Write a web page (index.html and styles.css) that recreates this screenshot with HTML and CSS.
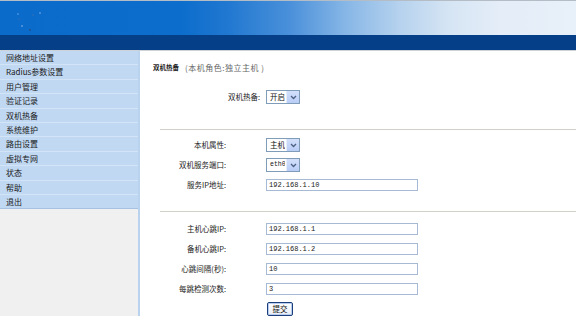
FILE: index.html
```html
<!DOCTYPE html>
<html lang="zh-CN">
<head>
<meta charset="utf-8">
<title>双机热备</title>
<link rel="stylesheet" href="styles.css">
</head>
<body>
<div class="header">
  <svg class="logo" width="60" height="34" viewBox="0 0 60 34">
    <circle cx="18" cy="13" r="0.8" fill="#6fa8e8"/>
    <circle cx="33" cy="14" r="0.8" fill="#3e6fae"/>
    <circle cx="40" cy="12" r="0.8" fill="#7fb4ec"/>
    <circle cx="19" cy="18" r="0.7" fill="#3c6aa8"/>
    <circle cx="22" cy="25" r="0.8" fill="#8fbcef"/>
    <circle cx="30" cy="29" r="0.9" fill="#224d86"/>
  </svg>
</div>
<div class="navbar"></div>
<div class="main">
  <div class="sidebar">
    <ul class="menu">
      <li>网络地址设置</li>
      <li>Radius参数设置</li>
      <li>用户管理</li>
      <li>验证记录</li>
      <li>双机热备</li>
      <li>系统维护</li>
      <li>路由设置</li>
      <li>虚拟专网</li>
      <li>状态</li>
      <li>帮助</li>
      <li>退出</li>
    </ul>
    <div class="sidebar-fill"></div>
  </div>
  <div class="content">
    <div class="title"><b>双机热备</b><span class="role">(本机角色:独立主机 )</span></div>
    <div class="form-top">
      <label class="lbl">双机热备:</label>
      <span class="sel"><select><option>开启</option><option>关闭</option></select><span class="arrow"><svg width="7" height="5" viewBox="0 0 7 5"><path d="M1 1 L3.5 3.5 L6 1" fill="none" stroke="#4d6185" stroke-width="1.3"/></svg></span></span>
    </div>
    <hr class="sep sep1">
    <div class="form-grid">
      <label class="lbl">本机属性:</label>
      <span class="sel"><select><option>主机</option><option>备机</option></select><span class="arrow"><svg width="7" height="5" viewBox="0 0 7 5"><path d="M1 1 L3.5 3.5 L6 1" fill="none" stroke="#4d6185" stroke-width="1.3"/></svg></span></span>
      <label class="lbl">双机服务端口:</label>
      <span class="sel mono"><select><option>eth0</option><option>eth1</option></select><span class="arrow"><svg width="7" height="5" viewBox="0 0 7 5"><path d="M1 1 L3.5 3.5 L6 1" fill="none" stroke="#4d6185" stroke-width="1.3"/></svg></span></span>
      <label class="lbl">服务IP地址:</label>
      <input class="txt" type="text" value="192.168.1.10">
    </div>
    <hr class="sep sep2">
    <div class="form-grid">
      <label class="lbl">主机心跳IP:</label>
      <input class="txt" type="text" value="192.168.1.1">
      <label class="lbl">备机心跳IP:</label>
      <input class="txt" type="text" value="192.168.1.2">
      <label class="lbl">心跳间隔(秒):</label>
      <input class="txt" type="text" value="10">
      <label class="lbl">每跳检测次数:</label>
      <input class="txt" type="text" value="3">
      <span></span>
      <span class="btn-cell"><button class="btn" type="button">提交</button></span>
    </div>
  </div>
</div>
</body>
</html>
```

FILE: styles.css
```css
* { box-sizing: border-box; }
html, body {
  margin: 0;
  padding: 0;
  background: #ffffff;
}
body {
  width: 576px;
  font-family: "Noto Sans CJK SC", "Liberation Sans", sans-serif;
  color: #222;
  overflow: hidden;
}
.header {
  height: 35px;
  border-top: 1px solid #b4bcc6;
  background: linear-gradient(to right,
    #0a6bcb 0px,
    #0c6dcc 180px,
    #1f77d0 225px,
    #4a90da 290px,
    #86b6e6 345px,
    #b6d2ee 400px,
    #d6e5f4 450px,
    #e4edf8 500px,
    #e8f0f9 576px);
}
.logo { display: block; }
.navbar {
  height: 15px;
  background: #053f87;
}
.main {
  display: flex;
  align-items: flex-start;
  border-top: 1px solid #cdd2d8;
}
.sidebar {
  width: 140px;
  flex: none;
  border-right: 2px solid #b9d3ee;
}
.menu {
  list-style: none;
  margin: 0;
  padding: 0;
}
.menu li {
  height: 14.4px;
  line-height: 13.4px;
  padding-left: 6px;
  font-size: 8px;
  color: #1a1a1a;
  background: #c0d8f2;
  border-bottom: 1px solid #d3e4f7;
}
.menu li:last-child {
  border-bottom: 1px solid #a6c2e2;
}
.sidebar-fill {
  height: 107px;
  background: #f0f0f0;
}
.content {
  flex: 1;
  padding-top: 11px;
}
.title {
  display: flex;
  align-items: center;
  height: 10px;
  padding-left: 13px;
}
.title b {
  font-size: 6.5px;
  color: #222;
}
.role {
  margin-left: 6px;
  font-size: 8px;
  letter-spacing: 0.5px;
  color: #666;
}
.form-top {
  display: grid;
  grid-template-columns: 120px auto;
  column-gap: 6px;
  align-items: center;
  justify-items: start;
  margin-top: 18px;
}
.form-grid {
  display: grid;
  grid-template-columns: 86px auto;
  column-gap: 40px;
  row-gap: 6px;
  align-items: center;
  justify-items: start;
}
.lbl {
  justify-self: end;
  font-size: 7.5px;
  line-height: 14px;
  color: #222;
}
.sep {
  border: 0;
  border-top: 1px solid #d0d0c8;
  height: 0;
  margin: 0 0 0 20px;
}
.sep1 { margin-top: 25px; margin-bottom: 8px; }
.sep2 { margin-top: 19px; margin-bottom: 10px; }
.sel {
  display: flex;
  width: 34px;
  height: 14px;
  border: 1px solid #7f9db9;
  background: #fff;
}
.sel select {
  appearance: none;
  -webkit-appearance: none;
  flex: 1;
  min-width: 0;
  border: 0;
  margin: 0;
  padding: 0 0 0 3px;
  background: #fff;
  font-family: "Noto Sans CJK SC", sans-serif;
  font-size: 7.5px;
  line-height: 12px;
  height: 12px;
  color: #111;
  outline: none;
}
.sel.mono select {
  font-family: "Liberation Mono", monospace;
  font-size: 6.5px;
}
.arrow {
  width: 13px;
  height: 12px;
  margin: 0 0 0 1px;
  background: linear-gradient(#d3e0fb, #b9cdf6);
  border-left: 1px solid #e6eefc;
  display: flex;
  align-items: center;
  justify-content: center;
}
.arrow svg { display: block; }
.txt {
  width: 152px;
  height: 12px;
  margin: 1px 0;
  padding: 0 2px;
  border: 1px solid #a6bad6;
  font-family: "Liberation Mono", monospace;
  font-size: 7px;
  color: #222;
  background: #fff;
  outline: none;
}
.btn-cell {
  display: flex;
}
.btn {
  display: block;
  width: 26px;
  height: 14px;
  margin: 0 0 0 1px;
  padding: 0;
  border: 1px solid #1c3e7a;
  border-radius: 2px;
  background: linear-gradient(#ffffff, #e8ecf4);
  box-shadow: inset 0 0 0 1px #b8cdf0;
  font-family: "Noto Sans CJK SC", sans-serif;
  font-size: 7.5px;
  line-height: 12px;
  color: #111;
}
```
